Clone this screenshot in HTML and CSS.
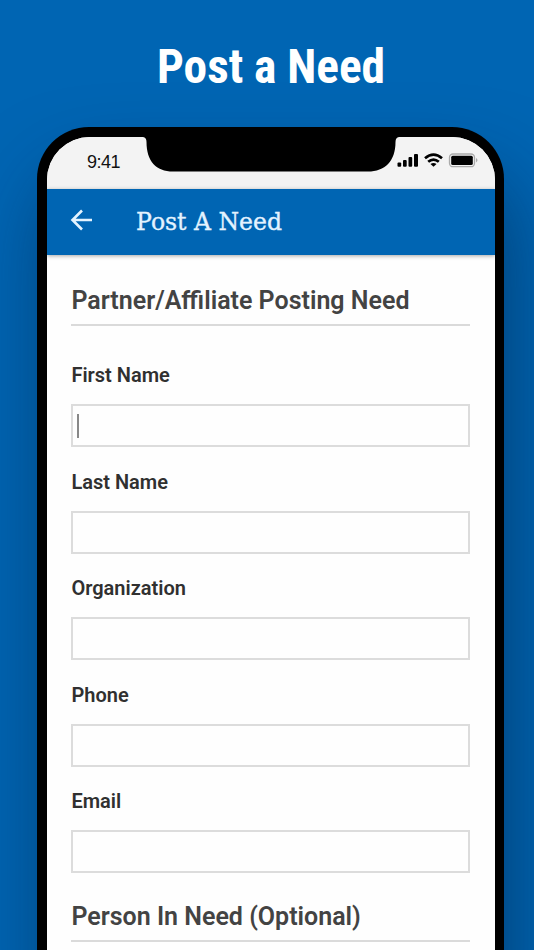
FILE: index.html
```html
<!DOCTYPE html>
<html lang="en">
<head>
<meta charset="utf-8">
<title>Post a Need</title>
<link rel="stylesheet" href="styles.css">
</head>
<body>
<main class="page">
  <h1 class="hero"><svg width="534" height="60"><text class="hero-text" x="157" y="45" textLength="228" lengthAdjust="spacingAndGlyphs">Post a Need</text></svg></h1>
  <div class="phone">
    <div class="screen">
      <div class="status">
        <span class="time">9:41</span>
        <svg class="notch" width="256" height="36" viewBox="0 0 256 36"><path d="M0 -1H256V0Q252.500.5 252.500 5C252.500 24 242 34.500 225 34.500H30C13 34.500 3.500 24 3.500 5Q3.500.5 0 0Z"/></svg>
        <svg class="indicators" width="84" height="16" viewBox="0 0 84 16">
          <rect x="0.500" y="9.500" width="3.700" height="4.300" rx="1"/><rect x="6" y="7" width="3.700" height="6.800" rx="1"/><rect x="11.500" y="4" width="3.700" height="9.800" rx="1"/><rect x="17" y="1" width="4" height="12.800" rx="1"/>
          <g class="waves"><path d="M28 5.200Q36.500 -1.900 45 5.200M31.200 8.800Q36.500 4.300 41.800 8.800"/></g>
          <path d="M33.500 11Q36.500 8.900 39.500 11L36.500 13.800Z"/>
          <rect class="shell" x="52.500" y="1" width="25" height="12.700" rx="3.500"/><rect x="54.200" y="2.800" width="21.600" height="9.100" rx="1.500"/><path class="cap" d="M79 5Q82 7.200 79 9.500Z"/>
        </svg>
      </div>
      <header class="appbar">
        <svg class="back" width="24" height="22" viewBox="0 0 24 22"><path d="M22 11H2.500M12 1.500L2.500 11L12 20.500"/></svg>
        <svg class="appbar-title" width="150" height="36"><text x="0" y="27.500" textLength="146" lengthAdjust="spacingAndGlyphs">Post A Need</text></svg>
      </header>
      <form class="form">
        <h2>Partner/Affiliate Posting Need</h2>
        <div class="field"><label>First Name</label><div class="box"><span class="caret"></span></div></div>
        <div class="field"><label>Last Name</label><div class="box"></div></div>
        <div class="field"><label>Organization</label><div class="box"></div></div>
        <div class="field"><label>Phone</label><div class="box"></div></div>
        <div class="field"><label>Email</label><div class="box"></div></div>
        <h2 class="second">Person In Need (Optional)</h2>
      </form>
    </div>
  </div>
</main>
</body>
</html>
```
FILE: styles.css
```css
* { box-sizing: border-box; }
body { margin: 0; background: #0065b3; font-family: Roboto, sans-serif; }
.page { width: 534px; height: 950px; overflow: hidden; }
.hero { margin: 0; height: 127px; padding-top: 38px; }
svg { display: block; }
.hero-text { font: 700 48px "Roboto Condensed", Roboto, sans-serif; fill: #fff; }
.phone { width: 467px; height: 1020px; margin-left: 37.400px; padding: 9.500px 9.500px 0; background: #000; border-radius: 52px 52px 0 0; box-shadow: 9px 50px 80px rgba(0,30,60,.5); }
.screen { height: 1020px; background: #fefefe; border-radius: 43px 43px 0 0; overflow: hidden; }
.status { height: 52px; background: #f3f3f3; display: flex; align-items: flex-start; }
.time { width: 96px; padding: 15px 0 0 40px; font: 18px/20px "Liberation Sans", sans-serif; letter-spacing: -.5px; color: #111; }
.notch { flex: none; overflow: visible; }
.indicators { margin: 16px 0 0 -2px; flex: none; }
.waves { fill: none; stroke: #000; stroke-width: 2.700; }
.indicators .shell { fill: none; stroke: #aaa; stroke-width: 1.300; }
.indicators .cap { fill: #aaa; }
.appbar { height: 66px; background: #0065b3; display: flex; align-items: center; padding: 0 0 3px 23px; box-shadow: 0 1px 4px rgba(0,0,0,.35); position: relative; }
.back path { fill: none; stroke: #e3f3ff; stroke-width: 2.600; }
.appbar-title { margin-left: 42px; font: 25px "Roboto Slab", "DejaVu Serif", serif; fill: #e3f3ff; stroke: #e3f3ff; stroke-width: .35; overflow: visible; }
.form { padding: 28px 25px 0 24.500px; }
h2 { margin: 0; height: 43px; border-bottom: 2px solid #dadada; font-size: 25px; line-height: 36px; font-weight: 600; color: #434343; white-space: nowrap; }
.field { height: 106.500px; padding-top: 36.500px; }
.field label { display: block; height: 42px; line-height: 27px; font-size: 20px; font-weight: 600; color: #303030; }
.box { height: 43px; border: 2px solid #dcdcdc; padding: 8px 4px; }
.caret { display: block; width: 2px; height: 24px; background: #888; }
.second { margin-top: 40.500px; }
```
